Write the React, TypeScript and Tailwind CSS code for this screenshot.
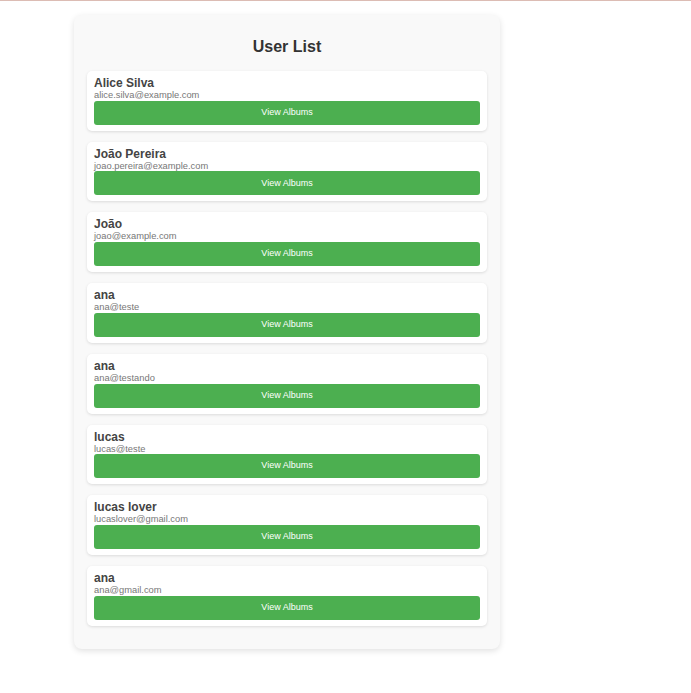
import React from "react";

const users = [
  { name: "Alice Silva", email: "alice.silva@example.com" },
  { name: "João Pereira", email: "joao.pereira@example.com" },
  { name: "João", email: "joao@example.com" },
  { name: "ana", email: "ana@teste" },
  { name: "ana", email: "ana@testando" },
  { name: "lucas", email: "lucas@teste" },
  { name: "lucas lover", email: "lucaslover@gmail.com" },
  { name: "ana", email: "ana@gmail.com" },
];

export default function App() {
  return (
    <div className="min-h-[693px] bg-white" style={{ fontFamily: '"Liberation Sans", Arial, sans-serif' }}>
      <div className="h-px bg-[#dcbcb4]" />
      <div className="ml-[74px] mt-[14px] w-[426px] rounded-[8px] bg-[#f9f9f9] px-[13px] pt-[23px] pb-[23px] shadow-[0_2px_6px_rgba(0,0,0,0.12)]">
        <h2 className="mb-[15px] text-center text-[16px] font-bold leading-[18px] text-[#333]">User List</h2>
        <div className="flex flex-col gap-[11px]">
          {users.map((u, i) => (
            <div key={i} className="rounded-[5px] bg-white px-[7px] pt-[5px] pb-[6px] shadow-[0_1px_3px_rgba(0,0,0,0.12)]">
              <div className="text-[12px] font-bold leading-[14px] text-[#444]">{u.name}</div>
              <div className="text-[9.33px] leading-[10.7px] text-[#777]">{u.email}</div>
              <button className="flex h-[24px] w-full items-center justify-center rounded-[3px] bg-[#4caf50] text-[9px] text-white">
                View Albums
              </button>
            </div>
          ))}
        </div>
      </div>
    </div>
  );
}
